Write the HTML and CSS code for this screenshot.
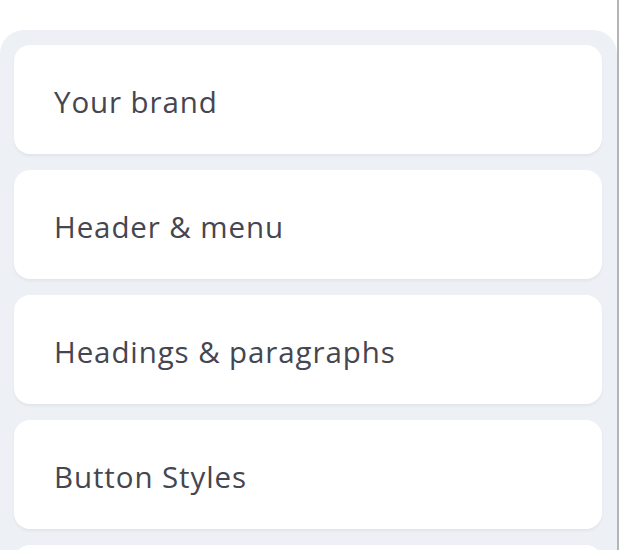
FILE: index.html
```html
<!DOCTYPE html>
<html>
<head>
<meta charset="utf-8">
<link rel="stylesheet" href="styles.css">
</head>
<body>
<div class="frame">
  <div class="panel">
    <div class="card">Your brand</div>
    <div class="card">Header &amp; menu</div>
    <div class="card">Headings &amp; paragraphs</div>
    <div class="card">Button Styles</div>
    <div class="card"></div>
  </div>
</div>
</body>
</html>
```
FILE: styles.css
```css
html, body {
  margin: 0;
  padding: 0;
  background: #ffffff;
  height: 550px;
  overflow: hidden;
}
.frame {
  width: 619px;
  height: 550px;
  border-right: 2px solid #b5b5b7;
  padding-top: 30px;
  box-sizing: border-box;
}
.panel {
  background: #edf1f5;
  border-radius: 24px 24px 0 0;
  padding: 15px 15px 0 14px;
  display: flex;
  flex-direction: column;
  gap: 16px;
  height: 600px;
}
.card {
  background: #ffffff;
  border-radius: 16px;
  height: 109px;
  flex: none;
  display: flex;
  align-items: center;
  padding-left: 40px;
  padding-top: 4px;
  box-sizing: border-box;
  box-shadow: 0 2px 3px rgba(30, 50, 80, 0.06);
  font-family: "Open Sans", sans-serif;
  font-size: 29.5px;
  letter-spacing: 0.9px;
  color: #45464f;
}
```
